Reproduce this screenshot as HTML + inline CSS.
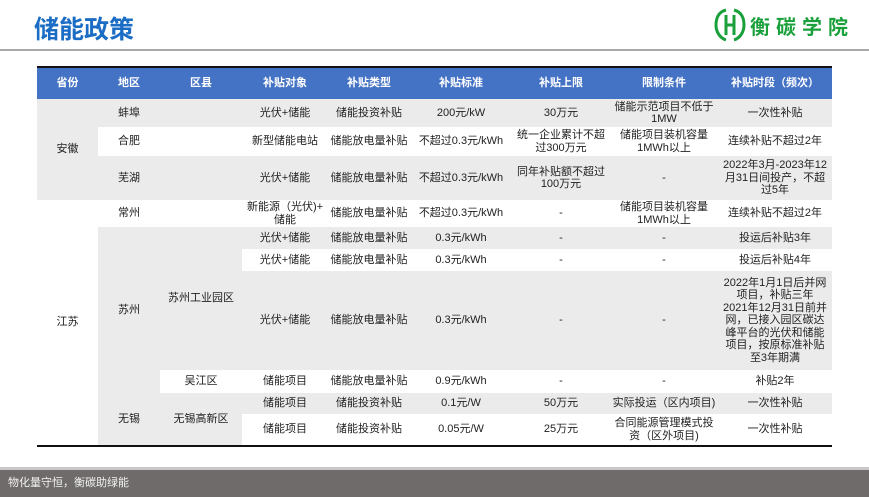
<!DOCTYPE html>
<html><head><meta charset="utf-8"><style>
body{margin:0;width:869px;height:497px;background:#fff;position:relative;overflow:hidden;font-family:"Liberation Sans","Noto Sans CJK SC",sans-serif;}
.title{position:absolute;left:34px;top:10px;font-size:25px;font-weight:bold;color:#1a6cc4;}
.hr{position:absolute;left:0;top:49px;width:869px;height:2px;background:#a9a9a9;}
.logo{position:absolute;left:714px;top:6px;height:38px;display:flex;align-items:center;}
.logo span{font-size:20px;color:#1aa03a;font-weight:bold;letter-spacing:6px;margin-left:4px}
table{position:absolute;left:37px;top:66px;border-collapse:collapse;table-layout:fixed;width:795px;border-top:2px solid #111;border-bottom:2px solid #111;}
td,th{padding:0;text-align:center;vertical-align:middle;font-size:11px;line-height:12.5px;color:#222;overflow:hidden}
th{background:#4472c4;color:#fff;font-weight:bold;height:31px;}
.g{background:#ebebeb}
.footer{position:absolute;left:0;top:467px;width:869px;height:3px;background:#c8c8c8}
.fb{position:absolute;left:0;top:470px;width:869px;height:27px;background:#6f6b6a;color:#f2f2f2;font-size:11px;line-height:27px;padding-left:8px;box-sizing:border-box}
</style></head><body>
<div class="title">储能政策</div>
<div class="logo">
<svg width="32" height="36" viewBox="0 0 32 36"><path d="M12 3 C4 5 2 12 2 18 C2 25 6 31 12 33" fill="none" stroke="#1aa03a" stroke-width="3"/><path d="M20 3 C28 5 30 12 30 18 C30 25 26 31 20 33" fill="none" stroke="#1aa03a" stroke-width="3"/><path d="M12 8 L12 28 M20 8 L20 28 M12 18 L20 18" stroke="#1aa03a" stroke-width="3"/></svg>
<span>衡碳学院</span></div>
<div class="hr"></div>
<table>
<colgroup><col style="width:61px"><col style="width:62px"><col style="width:82px"><col style="width:86px"><col style="width:82px"><col style="width:102px"><col style="width:98px"><col style="width:108px"><col style="width:114px"></colgroup>
<tr><th>省份</th><th>地区</th><th>区县</th><th>补贴对象</th><th>补贴类型</th><th>补贴标准</th><th>补贴上限</th><th>限制条件</th><th>补贴时段（频次）</th></tr>
<tr class="g" style="height:28px"><td rowspan="3" class="g">安徽</td><td>蚌埠</td><td></td><td>光伏+储能</td><td>储能投资补贴</td><td>200元/kW</td><td>30万元</td><td>储能示范项目不低于<br>1MW</td><td>一次性补贴</td></tr>
<tr style="height:29px"><td>合肥</td><td></td><td>新型储能电站</td><td>储能放电量补贴</td><td>不超过0.3元/kWh</td><td>统一企业累计不超<br>过300万元</td><td>储能项目装机容量<br>1MWh以上</td><td>连续补贴不超过2年</td></tr>
<tr class="g" style="height:44px"><td>芜湖</td><td></td><td>光伏+储能</td><td>储能放电量补贴</td><td>不超过0.3元/kWh</td><td>同年补贴额不超过<br>100万元</td><td>-</td><td>2022年3月-2023年12<br>月31日间投产，不超<br>过5年</td></tr>
<tr style="height:27px"><td rowspan="7">江苏</td><td>常州</td><td></td><td>新能源（光伏)+<br>储能</td><td>储能放电量补贴</td><td>不超过0.3元/kWh</td><td>-</td><td>储能项目装机容量<br>1MWh以上</td><td>连续补贴不超过2年</td></tr>
<tr class="g" style="height:22px"><td rowspan="4" class="g">苏州</td><td rowspan="3" class="g">苏州工业园区</td><td>光伏+储能</td><td>储能放电量补贴</td><td>0.3元/kWh</td><td>-</td><td>-</td><td>投运后补贴3年</td></tr>
<tr style="height:22px"><td>光伏+储能</td><td>储能放电量补贴</td><td>0.3元/kWh</td><td>-</td><td>-</td><td>投运后补贴4年</td></tr>
<tr class="g" style="height:99px"><td>光伏+储能</td><td>储能放电量补贴</td><td>0.3元/kWh</td><td>-</td><td>-</td><td>2022年1月1日后并网<br>项目，补贴三年<br>2021年12月31日前并<br>网，已接入园区碳达<br>峰平台的光伏和储能<br>项目，按原标准补贴<br>至3年期满</td></tr>
<tr style="height:23px"><td>吴江区</td><td>储能项目</td><td>储能放电量补贴</td><td>0.9元/kWh</td><td>-</td><td>-</td><td>补贴2年</td></tr>
<tr class="g" style="height:21px"><td rowspan="2" class="g">无锡</td><td rowspan="2" class="g">无锡高新区</td><td>储能项目</td><td>储能投资补贴</td><td>0.1元/W</td><td>50万元</td><td>实际投运（区内项目)</td><td>一次性补贴</td></tr>
<tr style="height:32px"><td>储能项目</td><td>储能投资补贴</td><td>0.05元/W</td><td>25万元</td><td>合同能源管理模式投<br>资（区外项目)</td><td>一次性补贴</td></tr>
</table>
<div class="footer"></div>
<div class="fb">物化量守恒，衡碳助绿能</div>
</body></html>
